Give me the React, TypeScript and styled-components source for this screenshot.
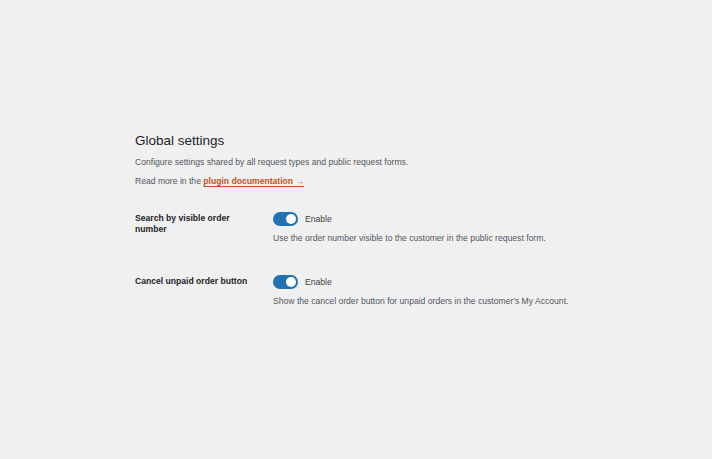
import React, { useState } from 'react'
import styled, { createGlobalStyle } from 'styled-components'

const GlobalStyle = createGlobalStyle`
  html, body {
    margin: 0;
    padding: 0;
    background: #f0f0f1;
  }
  body {
    font-family: "Liberation Sans", Arial, sans-serif;
    color: #3c434a;
    -webkit-font-smoothing: antialiased;
  }
`

const Page = styled.div`
  width: 712px;
  height: 459px;
  box-sizing: border-box;
  padding: 132px 0 0 135px;
`

const Heading = styled.h2`
  margin: 0 0 6px;
  font-size: 13.5px;
  line-height: 18px;
  font-weight: 400;
  color: #1d2327;
`

const Intro = styled.p`
  margin: 0 0 7px;
  font-size: 8.6px;
  line-height: 12px;
  color: #50575e;
`

const DocLink = styled.a`
  color: #c0531c;
  font-weight: 700;
  text-decoration: underline;
  text-underline-offset: 1.5px;
`

const Table = styled.div`
  display: flex;
  flex-direction: column;
  gap: 31px;
  margin-top: 25px;
`

const Row = styled.div`
  display: grid;
  grid-template-columns: 138px 1fr;
`

const Label = styled.div`
  font-size: 8.6px;
  line-height: 11px;
  font-weight: 700;
  color: #1d2327;
  padding-top: 1px;
  max-width: 118px;
`

const Field = styled.div`
  display: flex;
  flex-direction: column;
  gap: 6px;
`

const ToggleLine = styled.label`
  display: flex;
  align-items: center;
  gap: 7px;
  font-size: 8.6px;
  color: #3c434a;
  cursor: pointer;
`

const Track = styled.span<{ $on: boolean }>`
  position: relative;
  display: inline-block;
  width: 25px;
  height: 14px;
  border-radius: 7px;
  background: ${p => (p.$on ? '#2271b1' : '#8c8f94')};
  transition: background 0.15s;
`

const Knob = styled.span<{ $on: boolean }>`
  position: absolute;
  top: 2px;
  left: ${p => (p.$on ? '13px' : '2px')};
  width: 10px;
  height: 10px;
  border-radius: 50%;
  background: #fff;
  transition: left 0.15s;
`

const Help = styled.p`
  margin: 0;
  font-size: 8.6px;
  line-height: 12px;
  color: #50575e;
`

type Setting = {
  id: string
  label: string
  help: string
}

const settings: Setting[] = [
  {
    id: 'visible_order_number',
    label: 'Search by visible order number',
    help: 'Use the order number visible to the customer in the public request form.',
  },
  {
    id: 'cancel_unpaid',
    label: 'Cancel unpaid order button',
    help: "Show the cancel order button for unpaid orders in the customer's My Account.",
  },
]

function Toggle({ on, onChange }: { on: boolean; onChange: () => void }) {
  return (
    <ToggleLine onClick={onChange}>
      <Track $on={on}>
        <Knob $on={on} />
      </Track>
      <span>Enable</span>
    </ToggleLine>
  )
}

export default function App() {
  const [values, setValues] = useState<Record<string, boolean>>({
    visible_order_number: true,
    cancel_unpaid: true,
  })

  return (
    <>
      <GlobalStyle />
      <Page>
        <Heading>Global settings</Heading>
        <Intro>Configure settings shared by all request types and public request forms.</Intro>
        <Intro>
          Read more in the <DocLink href="#">plugin documentation →</DocLink>
        </Intro>
        <Table>
          {settings.map(s => (
            <Row key={s.id}>
              <Label>{s.label}</Label>
              <Field>
                <Toggle
                  on={values[s.id]}
                  onChange={() => setValues(v => ({ ...v, [s.id]: !v[s.id] }))}
                />
                <Help>{s.help}</Help>
              </Field>
            </Row>
          ))}
        </Table>
      </Page>
    </>
  )
}
